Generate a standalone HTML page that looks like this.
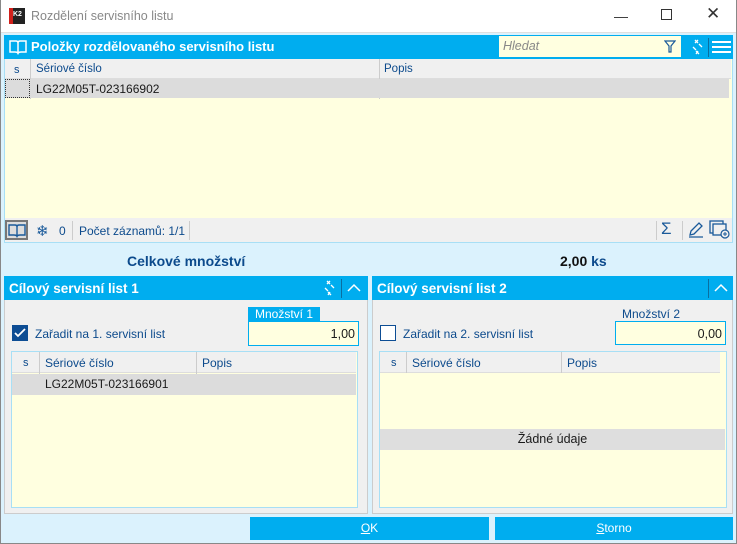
<!DOCTYPE html><html><head><meta charset="utf-8"><style>
*{box-sizing:border-box;margin:0;padding:0}
body{width:737px;height:544px;overflow:hidden;background:#dbf2fd;font-family:"Liberation Sans",sans-serif;font-size:12px;color:#1a1a1a;position:relative}
.a{position:absolute}
.hdr{background:#00adef;color:#fff;font-weight:bold;font-size:13px}
.blue{color:#0c4a8c}
.yel{background:#ffffe0}
.gh{background:#f0f0f0;color:#0c4a8c;font-size:11.5px}
</style></head><body>
<div class="a" style="left:0;top:0;width:737px;height:33px;background:#fff;border-bottom:1px solid #e0e0e0"></div>
<div class="a" style="left:9px;top:8px;width:16px;height:16px;background:#222"><div class="a" style="left:0;top:0;width:4px;height:16px;background:#d0201b"></div><span class="a" style="left:4px;top:3px;color:#fff;font-size:7px;font-weight:bold">K2</span></div>
<div class="a" style="left:31px;top:9px;color:#888;font-size:12.5px">Rozdělení servisního listu</div>
<div class="a" style="left:614px;top:8px;color:#333;font-size:14px">—</div>
<div class="a" style="left:661px;top:9px;width:11px;height:11px;border:1px solid #333"></div>
<div class="a" style="left:706px;top:4px;color:#333;font-size:17px">✕</div>

<div class="a hdr" style="left:4px;top:35px;width:729px;height:24px"></div>
<svg class="a" style="left:8px;top:38px" width="20" height="18"><path d="M2 3h6q2 0 2 2v10q-1-1-3-1H2z M18 3h-6q-2 0-2 2v10q1-1 3-1h5z" fill="none" stroke="#fff" stroke-width="1.5"/></svg>
<div class="a hdr" style="left:31px;top:39px">Položky rozdělovaného servisního listu</div>
<div class="a yel" style="left:499px;top:36px;width:182px;height:21px"></div>
<div class="a" style="left:503px;top:39px;color:#888;font-style:italic;font-size:12.5px">Hledat</div>
<svg class="a" style="left:664px;top:40px" width="12" height="13"><path d="M1 1h10L7 6v6H5V6z" fill="none" stroke="#1a5a9a" stroke-width="1.2"/></svg>
<svg class="a" style="left:690px;top:39px" width="14" height="16"><path d="M5 1l3 3M5 4l3-3M9 5l3 3M3 8l3 3M6 12l3 3M8 12l-2 3" stroke="#fff" stroke-width="1.3"/></svg>
<div class="a" style="left:708px;top:38px;width:1px;height:19px;background:#0a6ea0"></div>
<div class="a" style="left:712px;top:41px;width:19px;height:2px;background:#fff;box-shadow:0 5px #fff,0 10px #fff"></div>

<div class="a" style="left:4px;top:59px;width:729px;height:184px;border:1px solid #a8dff5;border-top:none;background:#ffffe0"></div>
<div class="a gh" style="left:5px;top:59px;width:726px;height:20px;border-bottom:1px solid #ddd"></div>
<div class="a blue" style="left:14px;top:64px;font-size:11px">s</div>
<div class="a" style="left:30px;top:59px;width:1px;height:40px;background:#ccc"></div>
<div class="a blue" style="left:36px;top:63px;font-size:11.5px">Sériové číslo</div>
<div class="a" style="left:379px;top:59px;width:1px;height:40px;background:#ccc"></div>
<div class="a blue" style="left:384px;top:63px;font-size:11.5px">Popis</div>
<div class="a" style="left:5px;top:79px;width:724px;height:19px;background:#dcdcdc"></div>
<div class="a" style="left:5px;top:79px;width:25px;height:19px;border:1px dotted #333"></div>
<div class="a" style="left:36px;top:82px;font-size:12px">LG22M05T-023166902</div>
<div class="a" style="left:5px;top:218px;width:727px;height:24px;background:#f0f0f0"></div>
<div class="a" style="left:5px;top:220px;width:23px;height:20px;border:2px solid #777;background:#ddd"></div>
<svg class="a" style="left:8px;top:223px" width="18" height="15"><path d="M1 2h6q2 0 2 2v9q-1-1-3-1H1z M17 2h-6q-2 0-2 2v9q1-1 3-1h5z" fill="none" stroke="#1a5a9a" stroke-width="1.4"/></svg>
<div class="a" style="left:36px;top:222px;color:#1a5a9a;font-size:15px">❄</div>
<div class="a blue" style="left:59px;top:224px">0</div>
<div class="a" style="left:72px;top:221px;width:1px;height:19px;background:#ccc"></div>
<div class="a blue" style="left:79px;top:224px">Počet záznamů: 1/1</div>
<div class="a" style="left:189px;top:221px;width:1px;height:19px;background:#ccc"></div>
<div class="a" style="left:656px;top:221px;width:1px;height:19px;background:#ccc"></div>
<div class="a" style="left:661px;top:219px;color:#1a5a9a;font-size:17px">Σ</div>
<div class="a" style="left:682px;top:221px;width:1px;height:19px;background:#ccc"></div>
<svg class="a" style="left:687px;top:221px" width="18" height="18"><path d="M3 14l1-4 8-8 3 3-8 8z M2 16h14" fill="none" stroke="#1a5a9a" stroke-width="1.3"/></svg>
<svg class="a" style="left:709px;top:220px" width="22" height="20"><rect x="1" y="1" width="13" height="12" fill="none" stroke="#1a5a9a" stroke-width="1.3"/><rect x="4" y="4" width="13" height="11" fill="#f0f0f0" stroke="#1a5a9a" stroke-width="1.3"/><circle cx="16" cy="14" r="4" fill="#f0f0f0" stroke="#1a5a9a" stroke-width="1.2"/><path d="M14 14h4M16 12v4" stroke="#1a5a9a"/></svg>

<div class="a" style="left:127px;top:253px;font-weight:bold;font-size:14px;color:#0c4a8c">Celkové množství</div>
<div class="a" style="left:560px;top:253px;font-weight:bold;font-size:14px;color:#111">2,00 <span style="color:#0c4a8c">ks</span></div>

<!-- left panel -->
<div class="a" style="left:4px;top:276px;width:364px;height:238px;background:#f0f0f0;border:1px solid #ccc"></div>
<div class="a hdr" style="left:4px;top:276px;width:364px;height:24px"></div>
<div class="a hdr" style="left:9px;top:281px;font-size:13.5px">Cílový servisní list 1</div>
<svg class="a" style="left:322px;top:280px" width="14" height="16"><path d="M5 1l3 3M5 4l3-3M9 5l3 3M3 8l3 3M6 12l3 3M8 12l-2 3" stroke="#fff" stroke-width="1.3"/></svg>
<div class="a" style="left:341px;top:279px;width:1px;height:19px;background:#0a6ea0"></div>
<svg class="a" style="left:346px;top:282px" width="16" height="12"><path d="M2 9l6-6 6 6" fill="none" stroke="#fff" stroke-width="1.5"/></svg>
<div class="a" style="left:248px;top:307px;width:72px;height:14px;background:#00adef;color:#fff;font-size:12px;padding-left:7px;line-height:14px">Množství 1</div>
<div class="a yel" style="left:248px;top:321px;width:111px;height:25px;border:1px solid #00adef;text-align:right;padding:5px 3px;font-size:12.5px">1,00</div>
<div class="a" style="left:12px;top:325px;width:16px;height:16px;background:#0d4d94"><svg width="16" height="16"><path d="M3 8l3 3 7-7" fill="none" stroke="#fff" stroke-width="1.8"/></svg></div>
<div class="a blue" style="left:35px;top:327px;font-size:12px">Zařadit na 1. servisní list</div>
<div class="a yel" style="left:11px;top:351px;width:347px;height:157px;border:1px solid #a8dff5"></div>
<div class="a gh" style="left:12px;top:352px;width:344px;height:21px;border-bottom:1px solid #ddd"></div>
<div class="a blue" style="left:23px;top:357px;font-size:11px">s</div>
<div class="a" style="left:39px;top:352px;width:1px;height:43px;background:#ccc"></div>
<div class="a blue" style="left:45px;top:356px">Sériové číslo</div>
<div class="a" style="left:196px;top:352px;width:1px;height:43px;background:#ccc"></div>
<div class="a blue" style="left:202px;top:356px">Popis</div>
<div class="a" style="left:12px;top:374px;width:344px;height:21px;background:#dcdcdc"></div>
<div class="a" style="left:45px;top:377px">LG22M05T-023166901</div>

<!-- right panel -->
<div class="a" style="left:372px;top:276px;width:361px;height:238px;background:#f0f0f0;border:1px solid #ccc"></div>
<div class="a hdr" style="left:372px;top:276px;width:361px;height:24px"></div>
<div class="a hdr" style="left:377px;top:281px;font-size:13.5px">Cílový servisní list 2</div>
<div class="a" style="left:708px;top:279px;width:1px;height:19px;background:#0a6ea0"></div>
<svg class="a" style="left:713px;top:282px" width="16" height="12"><path d="M2 9l6-6 6 6" fill="none" stroke="#fff" stroke-width="1.5"/></svg>
<div class="a blue" style="left:622px;top:307px;font-size:12px">Množství 2</div>
<div class="a yel" style="left:615px;top:321px;width:111px;height:24px;border:1px solid #00adef;text-align:right;padding:5px 3px;font-size:12.5px">0,00</div>
<div class="a" style="left:380px;top:325px;width:16px;height:16px;border:1px solid #0d4d94;background:#fff"></div>
<div class="a blue" style="left:403px;top:327px;font-size:12px">Zařadit na 2. servisní list</div>
<div class="a yel" style="left:379px;top:351px;width:348px;height:157px;border:1px solid #a8dff5"></div>
<div class="a gh" style="left:380px;top:352px;width:340px;height:21px;border-bottom:1px solid #ddd"></div>
<div class="a blue" style="left:391px;top:357px;font-size:11px">s</div>
<div class="a" style="left:406px;top:352px;width:1px;height:21px;background:#ccc"></div>
<div class="a blue" style="left:412px;top:356px">Sériové číslo</div>
<div class="a" style="left:561px;top:352px;width:1px;height:21px;background:#ccc"></div>
<div class="a blue" style="left:567px;top:356px">Popis</div>
<div class="a" style="left:380px;top:429px;width:345px;height:21px;background:#dedede;text-align:center;line-height:21px;font-size:12.5px">Žádné údaje</div>

<div class="a" style="left:250px;top:517px;width:239px;height:23px;background:#00adef;color:#fff;text-align:center;line-height:23px"><u>O</u>K</div>
<div class="a" style="left:495px;top:517px;width:238px;height:23px;background:#00adef;color:#fff;text-align:center;line-height:23px"><u>S</u>torno</div>
<div class="a" style="left:0;top:0;width:737px;height:544px;border:1px solid #888;border-top:none;pointer-events:none"></div>
</body></html>
